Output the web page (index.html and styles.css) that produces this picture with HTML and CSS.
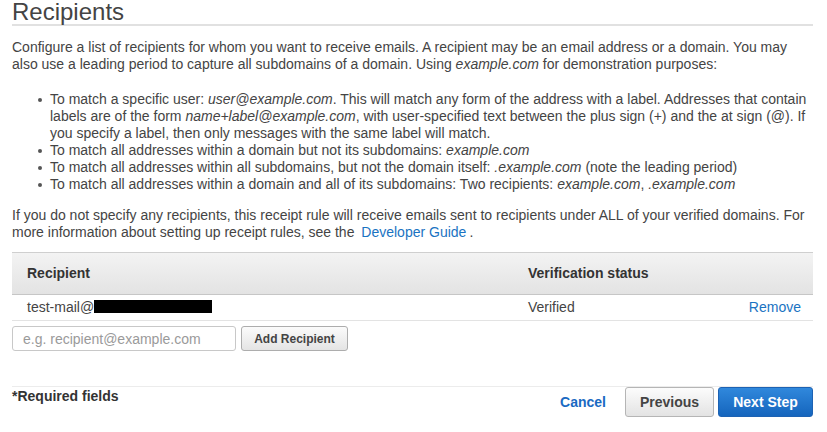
FILE: index.html
```html
<!DOCTYPE html>
<html>
<head>
<meta charset="utf-8">
<link rel="stylesheet" href="styles.css">
</head>
<body>
<div class="page">
  <h1 class="title">Recipients</h1>
  <p class="intro">Configure a list of recipients for whom you want to receive emails. A recipient may be an email address or a domain. You may also use a leading period to capture all subdomains of a domain. Using <i>example.com</i> for demonstration purposes:</p>
  <ul class="rules">
    <li>To match a specific user: <i>user@example.com</i>. This will match any form of the address with a label. Addresses that contain labels are of the form <i>name+label@example.com</i>, with user-specified text between the plus sign (+) and the at sign (@). If you specify a label, then only messages with the same label will match.</li>
    <li>To match all addresses within a domain but not its subdomains: <i>example.com</i></li>
    <li>To match all addresses within all subdomains, but not the domain itself: <i>.example.com</i> (note the leading period)</li>
    <li>To match all addresses within a domain and all of its subdomains: Two recipients: <i>example.com</i>, <i>.example.com</i></li>
  </ul>
  <p class="note">If you do not specify any recipients, this receipt rule will receive emails sent to recipients under ALL of your verified domains. For more information about setting up receipt rules, see the <a class="link guide" href="#">Developer Guide</a>.</p>

  <div class="table">
    <div class="thead">
      <div class="col-recipient">Recipient</div>
      <div class="col-status">Verification status</div>
    </div>
    <div class="row">
      <div class="col-recipient">test-mail@<span class="redact"></span></div>
      <div class="col-status">Verified</div>
      <a class="link remove" href="#">Remove</a>
    </div>
  </div>

  <div class="add">
    <input class="field" type="text" placeholder="e.g. recipient@example.com">
    <button class="btn btn-small">Add Recipient</button>
  </div>

  <div class="footer">
    <div class="required">*Required fields</div>
    <div class="actions">
      <a class="cancel" href="#">Cancel</a>
      <button class="btn btn-default">Previous</button>
      <button class="btn btn-primary">Next Step</button>
    </div>
  </div>
</div>
</body>
</html>
```

FILE: styles.css
```css
html, body {
  margin: 0;
  padding: 0;
  background: #fff;
}
body {
  font-family: "Liberation Sans", Arial, sans-serif;
  font-size: 14px;
  line-height: 17px;
  color: #444;
}
.page {
  padding: 0 14px 0 12px;
}
.title {
  margin: -1px 0 0;
  font-size: 24px;
  font-weight: normal;
  line-height: 25px;
  color: #444;
  border-bottom: 2px solid #e1e1e1;
}
.intro {
  margin: 13px 0 0;
}
.rules {
  margin: 18px 0 0;
  padding-left: 38px;
}
.rules li {
  list-style: none;
  position: relative;
}
.rules li::before {
  content: "";
  position: absolute;
  left: -12px;
  top: 7px;
  width: 4px;
  height: 4px;
  border-radius: 50%;
  background: #555;
}
.note {
  margin: 14px 0 0;
}
.link {
  color: #1a73c2;
  text-decoration: none;
}
.guide {
  margin: 0 3px 0 3px;
}
.table {
  margin-top: 11px;
}
.thead {
  display: flex;
  align-items: center;
  height: 41px;
  border-top: 1px solid #cfcfcf;
  border-bottom: 1px solid #c6c6c6;
  background: linear-gradient(#f3f3f3, #e3e3e3);
  font-weight: bold;
  color: #333;
}
.row {
  display: flex;
  align-items: center;
  height: 25px;
  border-bottom: 1px solid #e3e3e3;
}
.col-recipient {
  width: 501px;
  padding-left: 15px;
  box-sizing: border-box;
}
.col-status {
  flex: 1;
  padding-left: 15px;
}
.remove {
  padding-right: 12px;
}
.redact {
  display: inline-block;
  width: 118px;
  height: 13px;
  background: #000;
  vertical-align: -1px;
}
.add {
  display: flex;
  gap: 5px;
  margin-top: 5px;
}
.field {
  width: 224px;
  height: 25px;
  box-sizing: border-box;
  border: 1px solid #c8c8c8;
  border-radius: 3px;
  padding: 0 10px;
  font-family: inherit;
  font-size: 14px;
  color: #444;
}
.field::placeholder {
  color: #9a9a9a;
}
.btn {
  font-family: inherit;
  font-weight: bold;
  box-sizing: border-box;
  border-radius: 3px;
  cursor: pointer;
  padding: 0;
}
.btn-small {
  width: 107px;
  height: 25px;
  font-size: 12px;
  color: #444;
  border: 1px solid #adadad;
  background: linear-gradient(#fbfbfb, #e4e4e4);
}
.footer {
  display: flex;
  justify-content: space-between;
  margin-top: 35px;
  border-top: 1px solid #ececec;
}
.required {
  font-weight: bold;
  color: #333;
  margin-top: 1px;
}
.actions {
  display: flex;
  align-items: center;
  gap: 4px;
}
.cancel {
  font-weight: bold;
  color: #1a6ac2;
  text-decoration: none;
  margin-right: 15px;
}
.btn-default {
  width: 89px;
  height: 30px;
  font-size: 14px;
  color: #444;
  border: 1px solid #b5b5b5;
  background: linear-gradient(#fcfcfc, #e3e3e3);
}
.btn-primary {
  width: 95px;
  height: 30px;
  font-size: 14px;
  color: #fff;
  border: 1px solid #1d62b3;
  background: linear-gradient(#3088dc, #1565bd);
}
```
